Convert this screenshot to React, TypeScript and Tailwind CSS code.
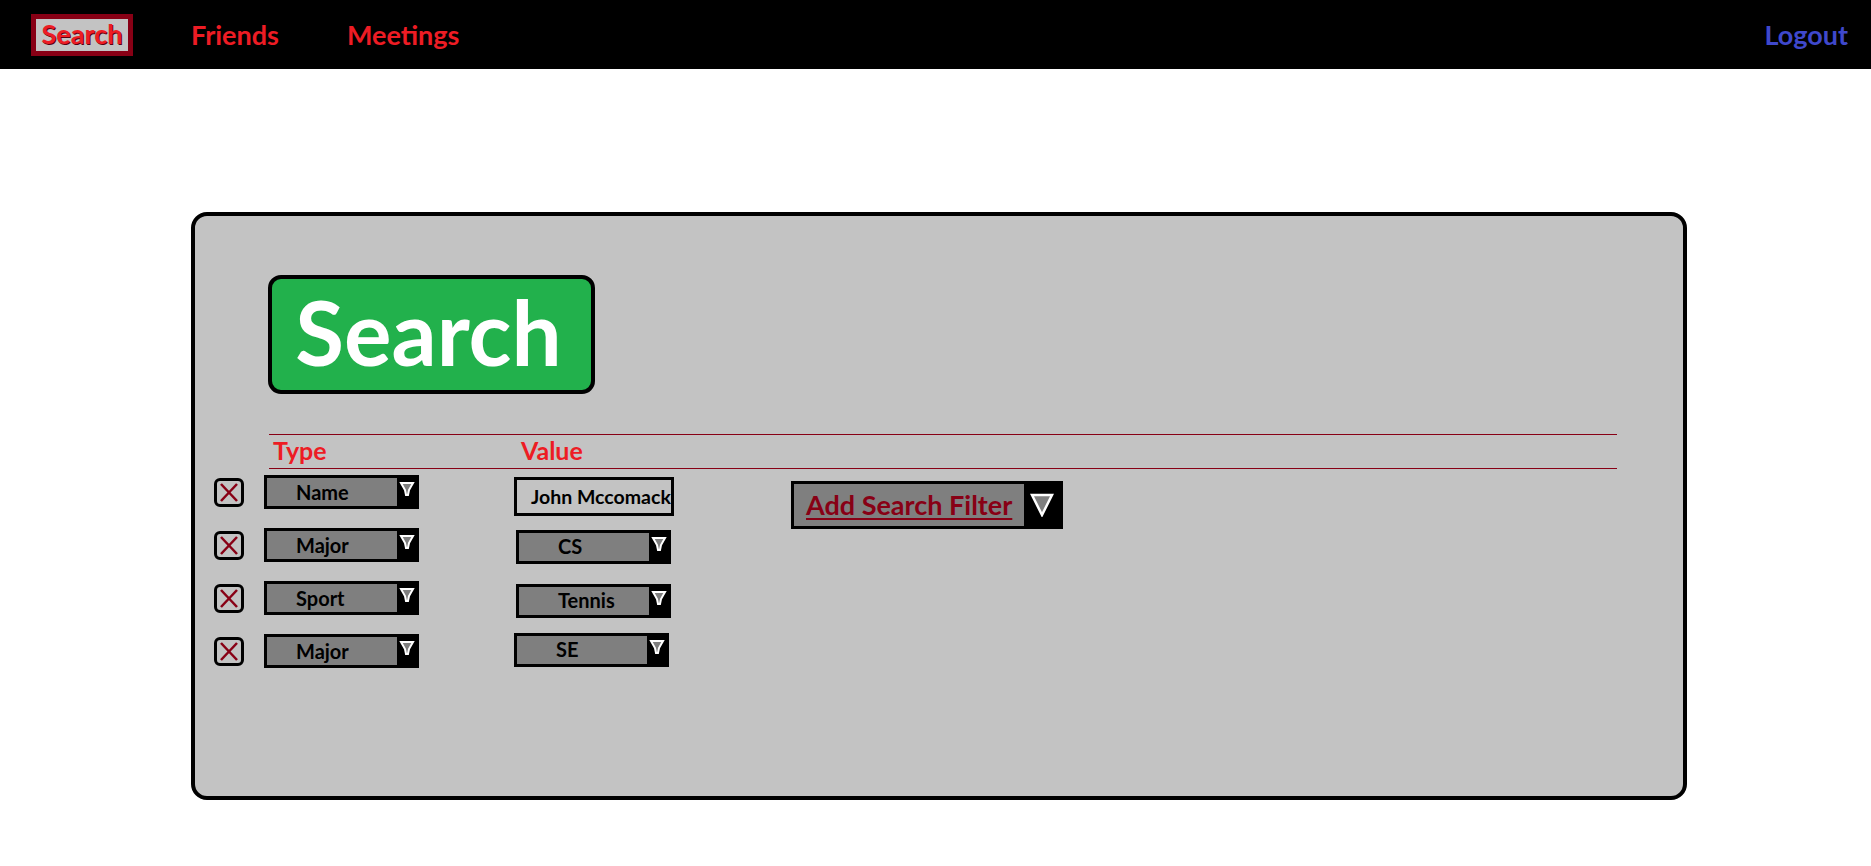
import React from 'react';

/**
 * Search page mockup: top nav, grey search panel with filter rows.
 */

const FONT = { fontFamily: 'Lato, "Open Sans", sans-serif' };

interface FilterRow {
  type: string;
  value: string;
  isInput?: boolean;
  typeTop: number;
  valueTop: number;
  valueLeft: number;
}

const rows: FilterRow[] = [
  { type: 'Name', value: 'John Mccomack', isInput: true, typeTop: 0, valueTop: 2, valueLeft: 95 },
  { type: 'Major', value: 'CS', typeTop: 0, valueTop: 2, valueLeft: 97 },
  { type: 'Sport', value: 'Tennis', typeTop: 0, valueTop: 3, valueLeft: 97 },
  { type: 'Major', value: 'SE', typeTop: 0, valueTop: -1, valueLeft: 95 },
];

function SmallArrow() {
  return (
    <svg width="16" height="16" viewBox="0 0 16 16">
      <polygon
        points="2,2 14,2 10,9 9,14 7,14 6,9"
        fill="#7f7f7f"
        stroke="#ffffff"
        strokeWidth="2"
        strokeLinejoin="miter"
      />
    </svg>
  );
}

function BigArrow() {
  return (
    <svg width="24" height="24" viewBox="0 0 24 24">
      <polygon points="2,2 22,2 12,22" fill="#7f7f7f" stroke="#ffffff" strokeWidth="2.5" />
    </svg>
  );
}

function RemoveBox() {
  return (
    <div className="w-[30px] h-[29px] border-[3px] border-black rounded-[6px] bg-[#c3c3c3] flex items-center justify-center">
      <svg width="22" height="21" viewBox="0 0 22 21">
        <line x1="3" y1="2" x2="19" y2="19" stroke="#880015" strokeWidth="2.5" />
        <line x1="19" y1="2" x2="3" y2="19" stroke="#880015" strokeWidth="2.5" />
      </svg>
    </div>
  );
}

function Select({ label, textPad, up }: { label: string; textPad: string; up?: boolean }) {
  return (
    <div className="w-[155px] h-[34px] border-[3px] border-black bg-[#7f7f7f] flex">
      <div
        className={`flex-1 flex text-[20px] font-bold text-black leading-none ${textPad} ${
          up ? 'items-start pt-[3px]' : 'items-center'
        }`}
      >
        {label}
      </div>
      <div className="w-[19px] bg-black flex items-start justify-center pt-[3px]">
        <SmallArrow />
      </div>
    </div>
  );
}

export default function App() {
  return (
    <div className="min-h-screen bg-white" style={FONT}>
      {/* top navigation */}
      <nav className="h-[69px] bg-black flex items-center pl-[31px] pr-[23px]">
        <div className="w-[102px] h-[42px] border-[5px] border-[#880015] bg-[#c3c3c3] flex items-center justify-center">
          <span className="text-[27px] font-bold text-[#ed1c24] leading-none pb-[2px] [text-shadow:1px_1px_0_#5a0010]">
            Search
          </span>
        </div>
        <a className="ml-[58px] text-[27px] font-bold text-[#ed1c24] leading-none">Friends</a>
        <a className="ml-[68px] text-[27px] font-bold text-[#ed1c24] leading-none">Meetings</a>
        <a className="ml-auto text-[27px] font-bold text-[#3f48cc] leading-none">Logout</a>
      </nav>

      {/* search panel */}
      <div className="ml-[191px] mt-[143px] w-[1496px] h-[588px] border-[4px] border-black rounded-[16px] bg-[#c3c3c3]">
        <div className="ml-[73px] mt-[59px] w-[327px] h-[119px] border-[4px] border-black rounded-[13px] bg-[#22b14c] flex items-center justify-center pb-[6px] pr-[6px]">
          <span className="text-[89px] font-bold text-white leading-none">Search</span>
        </div>

        <div className="ml-[74px] mt-[40px] w-[1348px]">
          <div className="h-px bg-[#880015]" />
          <div className="flex pl-[4px] pt-[3px] pb-[5px] text-[25px] font-bold text-[#ed1c24] leading-none">
            <div className="w-[248px]">Type</div>
            <div>Value</div>
          </div>
          <div className="h-px bg-[#880015]" />
        </div>

        <div className="ml-[19px] mt-[6px] flex flex-col gap-[19px]">
          {rows.map((r, i) => (
            <div key={i} className="h-[34px] flex items-start">
              <div className="mt-[3px]">
                <RemoveBox />
              </div>
              <div className="ml-[20px]" style={{ marginTop: r.typeTop }}>
                <Select label={r.type} textPad="pl-[29px]" />
              </div>
              <div style={{ marginLeft: r.valueLeft, marginTop: r.valueTop }}>
                {r.isInput ? (
                  <div className="w-[160px] h-[39px] border-[3px] border-black bg-[#c3c3c3] flex items-center pl-[14px] overflow-hidden whitespace-nowrap text-[19.5px] font-bold text-black leading-none">
                    John Mccomack
                  </div>
                ) : (
                  <Select label={r.value} textPad="pl-[39px]" up />
                )}
              </div>
              {i === 0 && (
                <div className="ml-[117px] mt-[6px] w-[272px] h-[48px] border-[3px] border-black bg-[#7f7f7f] flex">
                  <div className="flex-1 flex items-center pl-[12px] pb-[2px]">
                    <span className="text-[27px] font-bold text-[#880015] leading-none underline decoration-2 underline-offset-[3px]">
                      Add Search Filter
                    </span>
                  </div>
                  <div className="w-[36px] bg-black flex items-center justify-center">
                    <BigArrow />
                  </div>
                </div>
              )}
            </div>
          ))}
        </div>
      </div>
    </div>
  );
}
